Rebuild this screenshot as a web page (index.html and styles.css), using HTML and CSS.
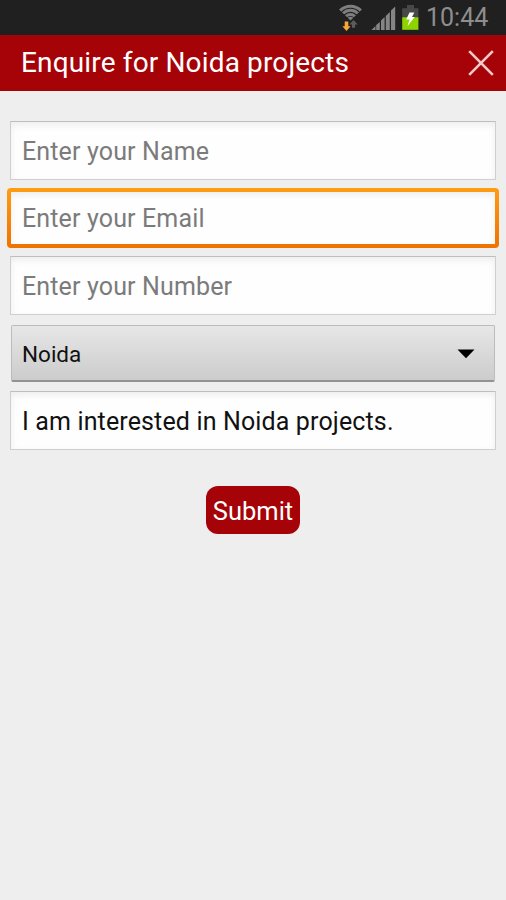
FILE: index.html
```html
<!DOCTYPE html>
<html lang="en">
<head>
<meta charset="utf-8">
<title>Enquire for Noida projects</title>
<link rel="stylesheet" href="styles.css">
</head>
<body>
<div class="status-bar">
  <svg class="status-icons" width="84" height="35" viewBox="338 0 84 35" aria-hidden="true">
    <defs><clipPath id="fan"><path d="M335 5.500L350.500 20.500L366 5.500V0H335z"/></clipPath></defs>
    <g clip-path="url(#fan)" fill="none" stroke="#7e7e7e" stroke-width="3">
      <circle cx="350.500" cy="20.500" r="14.300"/>
      <circle cx="350.500" cy="20.500" r="10.200"/>
      <circle cx="350.500" cy="20.500" r="6.100"/>
      <circle cx="350.500" cy="20.500" r="1.900" stroke-width="3.800"/>
    </g>
    <path fill="#fba638" d="M344.700 21.500h3.600v4.700h2.300L346.500 31l-4.100-4.800h2.300z"/>
    <path fill="#5c5c5c" d="M352 27.800V24.500h-2.700l4.200-4.600 4.300 4.600h-2.700v3.300z"/>
    <path fill="#858585" d="M371.500 30l4-4v4zM376.200 30v-5l3.600-3v8zM381 30v-9.500l3.600-3.500V30zM385.800 30V16l4-4v18zM391 30V10.500l4.200-4V30z"/>
    <path fill="#484848" d="M407 5h7v3.300h4.400V18h-16.200V8.300h4.800z"/>
    <path fill="#8ed500" d="M402.200 17.300h16.200v12.500h-16.200z"/>
    <path fill="#fff" d="M409.500 12.500h4.800L412 17h2.700l-7.200 9 2.100-6.500h-3.400z"/>
  </svg>
  <span class="clock">10:44</span>
</div>
<header class="title-bar">
  <h1 class="title">Enquire for Noida projects</h1>
  <button class="close" aria-label="Close">
    <svg width="26" height="26" viewBox="0 0 26 26"><path d="M1.200 1.200l23.600 23.600M24.800 1.200L1.200 24.800" fill="none" stroke="#f3c9ca" stroke-width="2.600"/></svg>
  </button>
</header>
<form class="form">
  <input class="field" type="text" placeholder="Enter your Name" aria-label="Name">
  <div class="focus-ring"><input class="field focused" type="text" placeholder="Enter your Email" aria-label="Email"></div>
  <input class="field" type="text" placeholder="Enter your Number" aria-label="Number">
  <div class="select"><span>Noida</span><svg width="18" height="10" viewBox="0 0 18 10"><path d="M.500 .500h17L9 9.300z"/></svg></div>
  <input class="field message" type="text" value="I am interested in Noida projects." aria-label="Message">
  <button class="submit" type="button">Submit</button>
</form>
</body>
</html>
```
FILE: styles.css
```css
* { box-sizing: border-box; }
body {
  margin: 0;
  height: 900px;
  overflow: hidden;
  background: #eeeeee;
  font-family: Roboto, "Liberation Sans", sans-serif;
}
.status-bar {
  display: flex;
  align-items: center;
  justify-content: flex-end;
  height: 35px;
  padding-right: 18px;
  background: #202020;
}
.status-icons { margin-right: 4px; }
.clock {
  width: 62px;
  color: #8e8e8e;
  font-size: 25px;
  line-height: 35px;
  white-space: nowrap;
}
.title-bar {
  display: flex;
  align-items: center;
  justify-content: space-between;
  height: 56px;
  padding: 0 12px 0 21px;
  background: #a50307;
}
.title {
  margin: 0;
  color: #fff;
  font-size: 28px;
  font-weight: 400;
  letter-spacing: .15px;
  line-height: 56px;
  white-space: nowrap;
}
.close {
  display: flex;
  padding: 0;
  border: 0;
  background: none;
}
.form {
  display: flex;
  flex-direction: column;
  padding: 30px 10px 0;
}
.field {
  flex: none;
  width: 100%;
  height: 59px;
  margin-bottom: 8px;
  padding: 2px 11px 0;
  border: 1px solid #cfcfcf;
  border-top-color: #bebebe;
  border-radius: 0;
  outline: 0;
  background: #fefefe;
  box-shadow: inset 0 3px 7px rgba(0, 0, 0, .07);
  color: #111;
  font: 25px Roboto, "Liberation Sans", sans-serif;
  letter-spacing: .14px;
}
.field::placeholder { color: #7b7b7b; opacity: 1; }
.focus-ring {
  height: 60px;
  margin: 0 -3px 8px;
  padding: 4px;
  border-radius: 4px;
  background: linear-gradient(#ff9c12, #ee7200);
}
.field.focused {
  height: 52px;
  margin: 0;
  padding-top: 0;
  border: 0;
}
.select {
  display: flex;
  align-items: center;
  justify-content: space-between;
  height: 57px;
  margin: 2px 1px 9px;
  padding: 2px 19px 0 10px;
  border: 1px solid #bcbcbc;
  border-bottom: 2px solid #929292;
  border-radius: 2px;
  background: linear-gradient(#e7e7e7, #cccccc);
  color: #111;
  font-size: 22.5px;
}
.submit {
  align-self: center;
  width: 94px;
  height: 48px;
  margin-top: 28px;
  padding: 2px 0 0;
  border: 0;
  border-radius: 12px;
  background: #a50307;
  color: #fff;
  font: 25.500px Roboto, "Liberation Sans", sans-serif;
}
```
